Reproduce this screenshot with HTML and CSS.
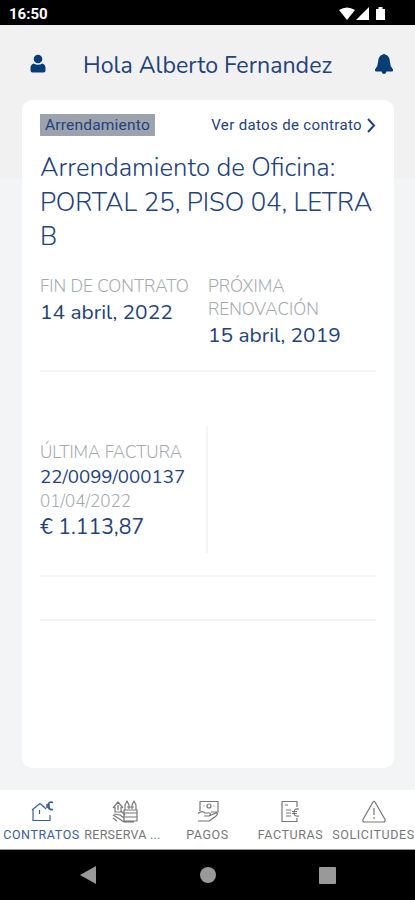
FILE: index.html
```html
<!DOCTYPE html>
<html lang="es">
<head>
<meta charset="utf-8">
<title>Contratos</title>
<link rel="stylesheet" href="styles.css">
</head>
<body>
<div class="status">
  <span>16:50</span>
  <svg width="49" height="16" viewBox="0 0 49 16" fill="#fff"><path d="M0 4Q8-1 16 4L8 14Z"/><path d="M30 1V14H17Z"/><path d="M37 3h2.500V1h4v2H46v11h-9Z"/></svg>
</div>
<header class="top">
  <svg class="user" width="16" height="20" viewBox="0 0 16 20"><circle cx="8" cy="5" r="4.300"/><path d="M3.500 9.500Q8 12 12.500 9.500Q15.500 10.500 15.500 14V16.500Q15.500 18.500 13.500 18.500H2.500Q.5 18.500.5 16.500V14Q.5 10.500 3.500 9.500Z"/></svg>
  <h1>Hola Alberto Fernandez</h1>
  <svg class="bell" width="20" height="22" viewBox="0 0 20 22"><path d="M9 1.500Q10 0 11 1.500Q15.500 2.500 15.800 8Q16 13 19 16.500Q19.500 18.500 18 18.500H2Q.5 18.500 1 16.500Q4 13 4.200 8Q4.500 2.500 9 1.500Z"/><path d="M7.500 18h5Q12 21 10 21T7.500 18Z"/></svg>
</header>
<main class="page">
  <section class="card">
    <div class="card-head">
      <span class="tag">Arrendamiento</span>
      <a class="more"><span>Ver datos de contrato</span><svg width="9" height="15" viewBox="0 0 9 15"><path d="M1 1l6 6.500L1 14"/></svg></a>
    </div>
    <h2>Arrendamiento de Oficina:<br>PORTAL 25, PISO 04, LETRA B</h2>
    <div class="dates">
      <div><div class="label">FIN DE CONTRATO</div><div class="value">14 abril, 2022</div></div>
      <div><div class="label">PRÓXIMA RENOVACIÓN</div><div class="value">15 abril, 2019</div></div>
    </div>
    <div class="invoice">
      <div class="label">ÚLTIMA FACTURA</div>
      <div class="number">22/0099/000137</div>
      <div class="label day">01/04/2022</div>
      <div class="value amount">€ 1.113,87</div>
    </div>
    <div class="spacer"></div>
  </section>
</main>
<nav class="tabs">
  <a class="active"><svg width="24" height="24" viewBox="0 0 24 24"><path d="M14 7L10 3.500 2 10M3 9V20.500H20V15M9.500 10v4M14 7l2 2"/><path class="bold" d="M23 2.500Q18.500 1 18 5.500Q18 10 23 9.500M16 5h4M16 7h4"/></svg><span>CONTRATOS</span></a>
  <a><svg width="28" height="24" viewBox="0 0 28 24"><path d="M2 8l5-6 5 6M4 7v5h6V7M7 5v5M2 15l5 3 6 4H23M2 18l4 3M3 14l6 1 4 3M14 10V5l2-4 2 4v4M21 9V5l2-4 2 4v5M13 10h13v11H13ZM13 13h13M13 17h13M16 7h7M10 11l4 4"/></svg><span class="reserve">RERSERVA ...</span></a>
  <a><svg width="24" height="24" viewBox="0 0 24 24"><path d="M4 11V1.500H22V12H15M7.500 6h1M17.500 6h1M2 13.500Q6 10 9 13H14Q15 15 13 16H8M13 16L20 13Q23 13 20 16L13 21H2"/><circle cx="13" cy="6" r="2"/></svg><span>PAGOS</span></a>
  <a><svg width="24" height="24" viewBox="0 0 24 24"><path d="M18 7V1.500H3V21.500H18V18M6 5h3M7 10h5M7 13h5M7 16h5M20 9Q15 8 15 12.500T20 16M13 11.500h5M13 13.500h5"/></svg><span>FACTURAS</span></a>
  <a><svg width="24" height="24" viewBox="0 0 24 24"><path d="M11 2Q12 .5 13 2L23 19.500Q23.500 22 21.500 22H2.500Q.5 22 1 19.500ZM12 8v7M12 17v2"/></svg><span>SOLICITUDES</span></a>
</nav>
<footer class="system">
  <svg width="16" height="18" viewBox="0 0 16 18"><path d="M16 0V18L0 9Z"/></svg>
  <svg width="16" height="16" viewBox="0 0 16 16"><circle cx="8" cy="8" r="8"/></svg>
  <svg width="17" height="17" viewBox="0 0 17 17"><rect width="17" height="17" rx="1"/></svg>
</footer>
</body>
</html>
```
FILE: styles.css
```css
* { box-sizing: border-box; }
body { margin: 0; width: 415px; height: 900px; display: flex; flex-direction: column; overflow: hidden; background: #f3f4f6; color: #24427a; font-family: Nunito, Lato, sans-serif; }
h1, h2 { margin: 0; font-weight: 400; }
.status { height: 25px; flex: none; background: #000; color: #fff; display: flex; align-items: center; justify-content: space-between; padding: 2px 27px 0 9px; font: 700 15px Roboto, sans-serif; }
.top { height: 75px; flex: none; background: #f1f1f1; display: flex; align-items: center; padding: 4px 21px 0 30px; }
.top svg { fill: #063e75; flex: none; }
.top h1 { margin: 1px 0 0 37px; width: 254px; white-space: nowrap; font-size: 23.200px; }
.top .user, .top .bell { margin-top: -2px; }
.bell { margin-left: auto; }
.page { flex: 1; min-height: 0; padding: 0 21px 22px 22px; background: linear-gradient(#f1f1f1 78px, #f3f4f6 78px); }
.card { height: 100%; background: #fff; border-radius: 10px; padding: 13px 18px 0; display: flex; flex-direction: column; }
.card-head { height: 24px; display: flex; justify-content: space-between; align-items: center; font-family: Roboto, sans-serif; white-space: nowrap; }
.tag { width: 115px; height: 22px; line-height: 23px; background: #9ca3af; padding-left: 5px; font-size: 15.500px; letter-spacing: .2px; }
.more { display: flex; align-items: center; gap: 5px; font-size: 15px; letter-spacing: .35px; }
.more svg { fill: none; stroke: #24427a; stroke-width: 2; }
h2 { margin: 14px -8px 0 0; font-size: 25.700px; line-height: 34.500px; font-weight: 365; }
.dates { display: grid; grid-template-columns: 168px 1fr; height: 117.500px; padding-top: 20.500px; border-bottom: 2px solid #f3f4f6; }
.dates > div { padding-right: 10px; }
.label { color: #a5a9b0; font-size: 17.150px; line-height: 23px; font-weight: 350; margin-right: -10px; }
.value { font-size: 20.900px; line-height: 29px; font-weight: 370; }
.invoice { width: 168px; height: 127px; margin-top: 53.500px; padding-top: 15px; border-right: 2px solid #f3f4f6; white-space: nowrap; }
.invoice .label { font-size: 17.050px; }
.number { font-size: 18.700px; line-height: 26px; font-weight: 370; }
.amount { font-size: 21.200px; line-height: 28px; }
.spacer { height: 68px; display: flex; border-bottom: 2px solid #f3f4f6; }
.spacer::before { content: ""; flex: 1; height: 22px; border-bottom: 2px solid #f3f4f6; }
.tabs { height: 60px; flex: none; background: #fff; display: grid; grid-template-columns: repeat(5, 83px); border-bottom: 1px solid #999; }
.tabs a { display: flex; flex-direction: column; align-items: center; padding-top: 10px; color: #777; font: 12.500px Roboto, sans-serif; white-space: nowrap; }
.tabs span { margin-top: 3px; letter-spacing: .6px; }
.tabs .reserve { letter-spacing: .25px; margin-right: 4px; }
.tabs svg { fill: none; stroke: currentColor; stroke-width: 1.200; stroke-linejoin: round; }
.tabs .active { color: #3c5f91; }
.tabs .bold { stroke-width: 1.700; }
.system { height: 50px; flex: none; background: #000; display: flex; align-items: center; justify-content: space-between; padding: 0 79px 0 80px; }
.system svg { fill: #999; }
```
